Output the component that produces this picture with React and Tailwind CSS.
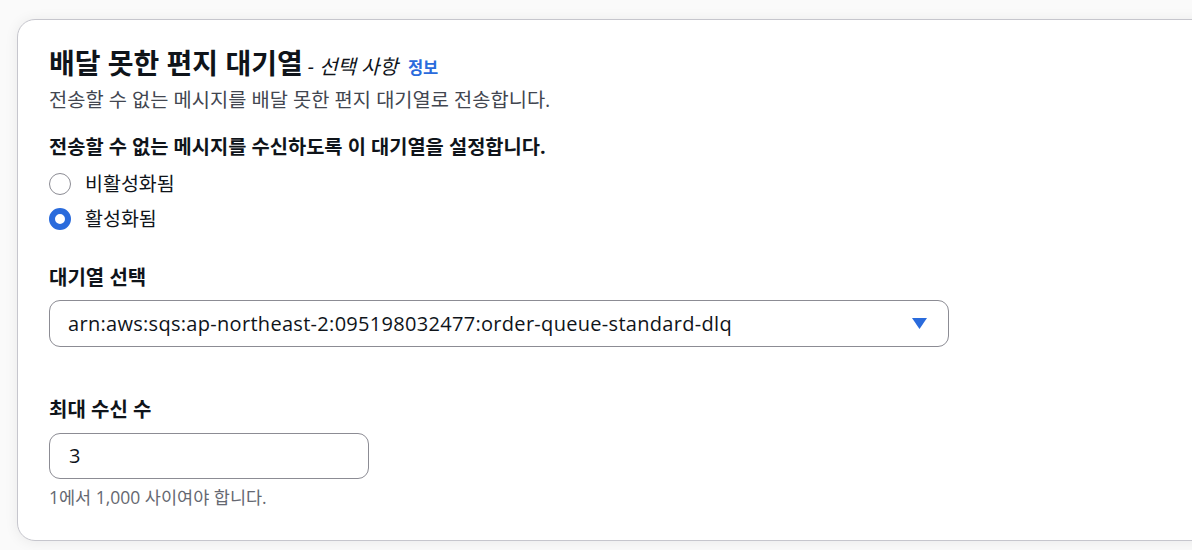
import React from 'react';

const font = { fontFamily: '"Open Sans", "Noto Sans CJK KR", sans-serif' };

function Radio({ checked, label }) {
  return (
    <label className="flex h-[35px] items-center">
      {checked ? (
        <span className="box-border h-[22px] w-[22px] rounded-full border-[6.5px] border-[#2a6bdc] bg-white" />
      ) : (
        <span className="box-border h-[22px] w-[22px] rounded-full border-[1.5px] border-[#8c8c94] bg-white" />
      )}
      <span className="ml-[14px] text-[19.5px] leading-[26px] text-[#0f141a]">{label}</span>
    </label>
  );
}

export default function App() {
  return (
    <div className="h-[550px] w-full overflow-hidden bg-[#fafafa] pl-[17px] pt-[19px]" style={font}>
      <div className="w-[1220px] rounded-[18px] border border-[#c6c6cd] bg-white pb-[32px] pl-[31px] pt-[27px] shadow-[0_1px_14px_rgba(0,7,22,0.07)]">
        {/* Header */}
        <div className="flex h-[32px] items-baseline">
          <h2 className="text-[28px] font-bold leading-[32px] text-[#0f141a]">배달 못한 편지 대기열</h2>
          <span className="ml-[5px] text-[20px] italic leading-none text-[#0f141a]">- 선택 사항</span>
          <a className="ml-[10px] text-[16.5px] font-bold leading-none text-[#2a6bdc]">정보</a>
        </div>
        <p className="mt-[8px] text-[19.8px] leading-[26px] text-[#424650]">
          전송할 수 없는 메시지를 배달 못한 편지 대기열로 전송합니다.
        </p>

        {/* Enable toggle */}
        <div className="mt-[21px] text-[19.8px] font-bold leading-[26px] text-[#0f141a]">
          전송할 수 없는 메시지를 수신하도록 이 대기열을 설정합니다.
        </div>
        <div className="mt-[6px]">
          <Radio label="비활성화됨" />
          <Radio checked label="활성화됨" />
        </div>

        {/* Queue select */}
        <div className="mt-[29px] text-[20px] font-bold leading-[26px] text-[#0f141a]">대기열 선택</div>
        <div className="mt-[9px] flex h-[47px] w-[900px] items-center justify-between rounded-[11px] border border-[#8c8c94] pl-[18px] pr-[21px]">
          <span className="text-[20px] leading-[26px] tracking-[0.015em] text-[#0f141a]">
            arn:aws:sqs:ap-northeast-2:095198032477:order-queue-standard-dlq
          </span>
          <svg width="15" height="11" viewBox="0 0 15 11">
            <polygon points="0,0 15,0 7.5,11" fill="#2a6bdc" />
          </svg>
        </div>

        {/* Max receive count */}
        <div className="mt-[50px] text-[20px] font-bold leading-[26px] text-[#0f141a]">최대 수신 수</div>
        <div className="mt-[10px] flex h-[46px] w-[320px] items-center rounded-[11px] border border-[#8c8c94] pl-[19px]">
          <span className="text-[20px] leading-[26px] text-[#0f141a]">3</span>
        </div>
        <p className="mt-[8px] text-[17.5px] leading-[21px] text-[#656871]">1에서 1,000 사이여야 합니다.</p>
      </div>
    </div>
  );
}
